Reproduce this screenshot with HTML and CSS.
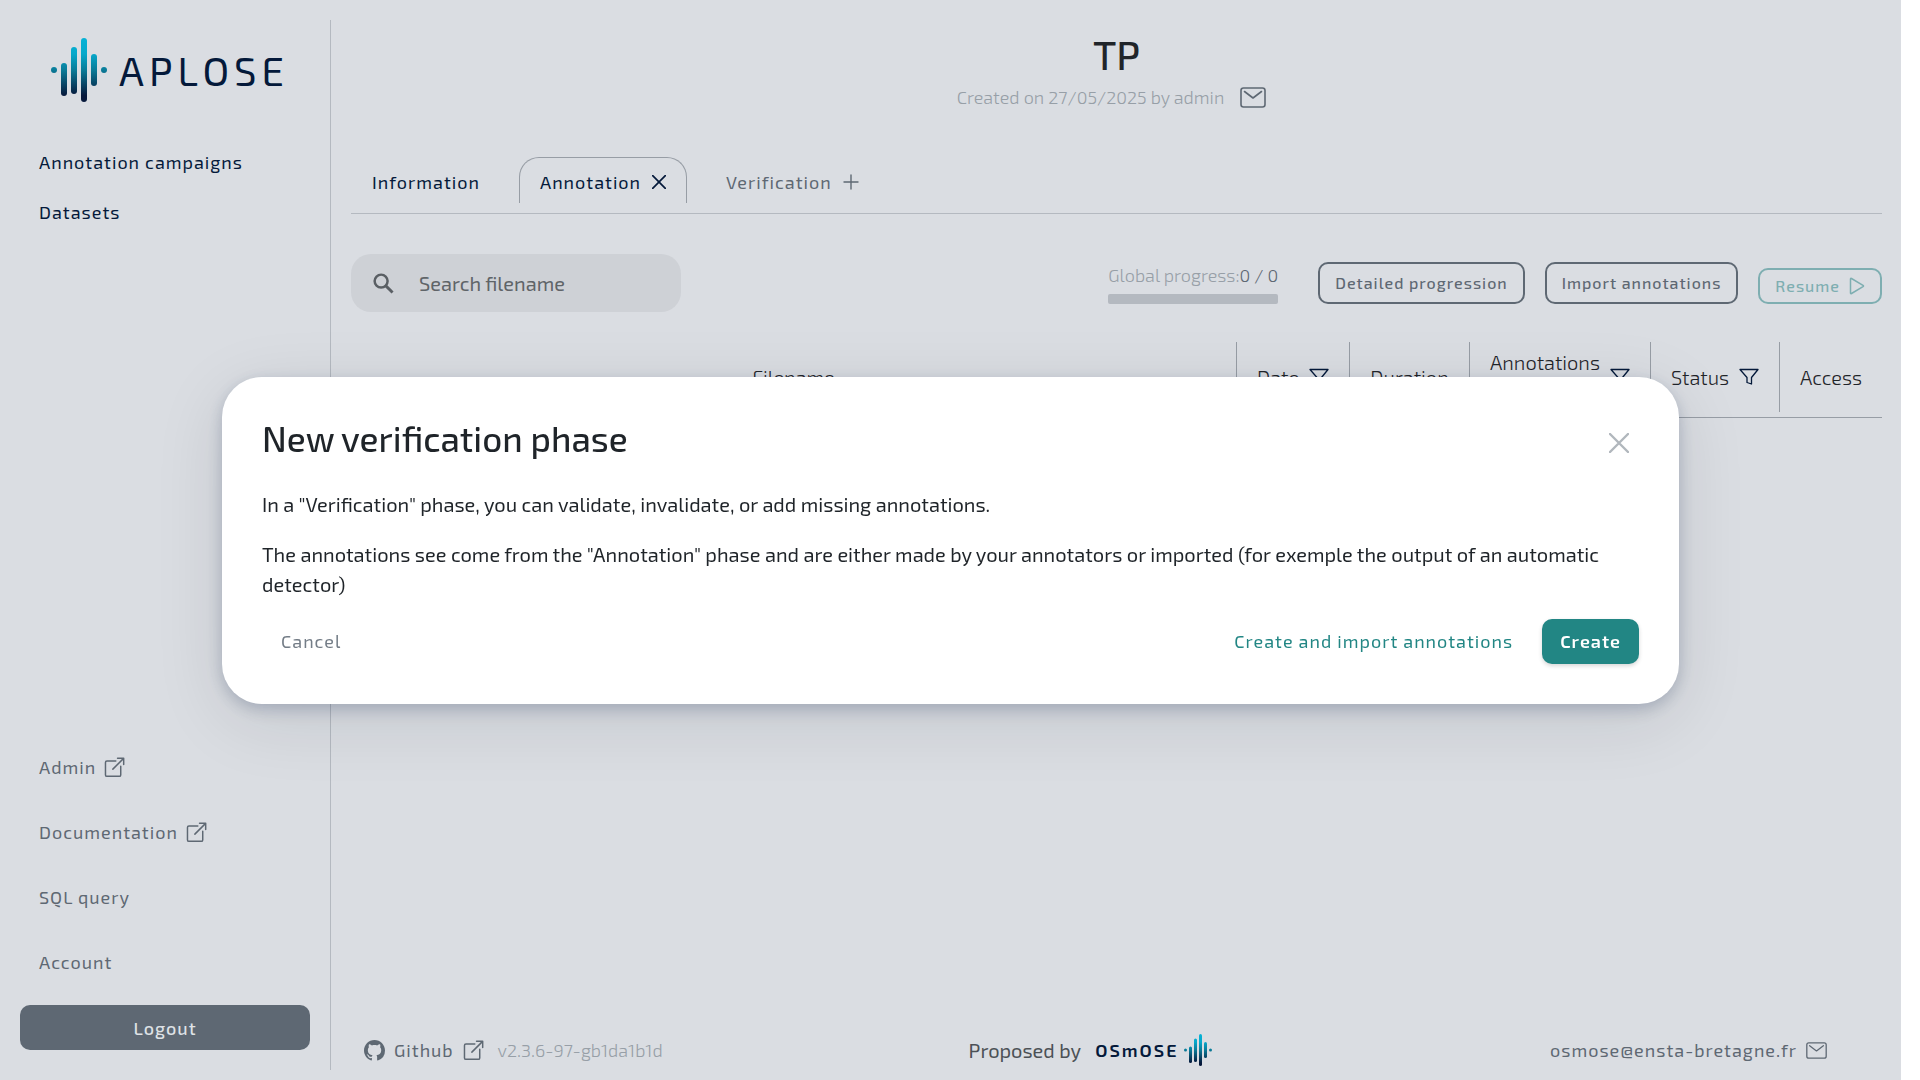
FILE: index.html
```html
<!DOCTYPE html>
<html lang="en">
<head>
<meta charset="utf-8">
<title>APLOSE</title>
<link rel="stylesheet" href="styles.css">
</head>
<body>
<svg class="defs" aria-hidden="true">
  <defs>
    <linearGradient id="wave" gradientUnits="userSpaceOnUse" x1="0" y1="0" x2="0" y2="64">
      <stop offset="0" stop-color="#06b2d6"/>
      <stop offset="0.25" stop-color="#06a8cb"/>
      <stop offset="0.5" stop-color="#0a7b98"/>
      <stop offset="0.9" stop-color="#06183b"/>
    </linearGradient>
  </defs>
  <symbol id="logo" viewBox="0 0 56 64">
    <g fill="url(#wave)">
      <circle cx="3" cy="32" r="3"/>
      <rect x="10" y="25" width="6" height="33" rx="3"/>
      <rect x="20" y="9" width="6" height="47" rx="3"/>
      <rect x="30" y="0" width="6" height="64" rx="3"/>
      <rect x="40" y="16" width="6" height="32" rx="3"/>
      <circle cx="53" cy="32" r="3"/>
    </g>
  </symbol>
  <symbol id="open" viewBox="0 0 512 512">
    <path d="M288 100H72q-36 0-36 36v300q0 36 36 36h300q36 0 36-36V224M330 32h150v150M472 40L216 296" fill="none" stroke="currentColor" stroke-width="36" stroke-linecap="round" stroke-linejoin="round"/>
  </symbol>
  <symbol id="mail" viewBox="0 0 26 21">
    <rect x="1" y="1" width="24" height="19" rx="2.5" fill="none" stroke="currentColor" stroke-width="1.6"/>
    <path d="M4.5 4.5L13 11l8.500-6.500" fill="none" stroke="currentColor" stroke-width="1.600" stroke-linecap="round" stroke-linejoin="round"/>
  </symbol>
  <symbol id="cross" viewBox="0 0 20 20">
    <path d="M1 1l18 18M19 1L1 19" fill="none" stroke="currentColor" stroke-width="2.400" stroke-linecap="round"/>
  </symbol>
  <symbol id="funnel" viewBox="0 0 20 18">
    <path d="M1 1.500h18l-6.500 8V16l-4.500-1.500V9.500z" fill="none" stroke="currentColor" stroke-width="1.300" stroke-linejoin="round"/>
  </symbol>
</svg>

<div class="app">
  <aside class="sidebar">
    <a class="brand" href="#"><svg class="brand-logo"><use href="#logo"/></svg><span>APLOSE</span></a>
    <nav class="nav">
      <a href="#">Annotation campaigns</a>
      <a href="#">Datasets</a>
    </nav>
    <nav class="links">
      <a href="#">Admin <svg class="icon"><use href="#open"/></svg></a>
      <a href="#">Documentation <svg class="icon"><use href="#open"/></svg></a>
      <a href="#">SQL query</a>
      <a href="#">Account</a>
    </nav>
    <button class="logout" type="button">Logout</button>
  </aside>

  <div class="page">
    <main class="main">
      <header class="heading">
        <h1>TP</h1>
        <p>Created on 27/05/2025 by admin
          <a href="#" aria-label="Send an email"><svg class="icon-mail"><use href="#mail"/></svg></a></p>
      </header>

      <nav class="tabs">
        <a class="tab" href="#">Information</a>
        <a class="tab tab-active" href="#">Annotation <svg class="icon-cross"><use href="#cross"/></svg></a>
        <a class="tab tab-muted" href="#">Verification
          <svg class="icon-plus" viewBox="0 0 16 16"><path d="M8 1v14M1 8h14" fill="none" stroke="currentColor" stroke-width="1.400" stroke-linecap="round"/></svg></a>
      </nav>

      <div class="toolbar">
        <label class="search">
          <svg class="icon" viewBox="0 0 22 22"><circle cx="8.500" cy="8.500" r="6.800" fill="none" stroke="currentColor" stroke-width="2.600"/><path d="M13.500 13.500l7 7" stroke="currentColor" stroke-width="3"/></svg>
          <input type="search" placeholder="Search filename" aria-label="Search filename">
        </label>
        <div class="progress">
          <p>Global progress:<span>0 / 0</span></p>
          <div class="bar"></div>
        </div>
        <div class="actions">
          <button class="outline" type="button">Detailed progression</button>
          <button class="outline" type="button">Import annotations</button>
          <button class="outline resume" type="button" disabled>Resume
            <svg viewBox="0 0 16 18"><path d="M1.500 2v14q0 1 1 .5L14 9.700q1-.7 0-1.400L2.500 1.500q-1-.5-1 .5z" fill="none" stroke="currentColor" stroke-width="1.500" stroke-linejoin="round"/></svg></button>
        </div>
      </div>

      <table class="files">
        <thead>
          <tr>
            <th class="file"><div class="cell">Filename</div></th>
            <th class="date"><div class="cell">Date <svg><use href="#funnel"/></svg></div></th>
            <th class="duration"><div class="cell">Duration</div></th>
            <th class="annotations"><div class="cell"><span class="two-lines">Annotations</span> <svg><use href="#funnel"/></svg></div></th>
            <th class="status"><div class="cell">Status <svg><use href="#funnel"/></svg></div></th>
            <th class="access"><div class="cell">Access</div></th>
          </tr>
        </thead>
      </table>
    </main>

    <footer class="footer">
      <div class="footer-part">
        <a href="#">
          <svg class="icon" viewBox="0 0 16 16"><path fill="currentColor" d="M8 0C3.580 0 0 3.580 0 8c0 3.540 2.290 6.530 5.470 7.590.4.070.55-.17.55-.38 0-.19-.01-.82-.01-1.490-2.010.37-2.530-.49-2.690-.94-.09-.23-.48-.94-.82-1.130-.28-.15-.68-.52-.01-.53.63-.01 1.080.58 1.230.82.72 1.210 1.870.87 2.330.66.07-.52.28-.87.51-1.070-1.780-.2-3.640-.89-3.640-3.950 0-.87.31-1.590.82-2.150-.08-.2-.36-1.020.08-2.120 0 0 .67-.21 2.200.82.64-.18 1.320-.27 2-.27s1.360.09 2 .27c1.530-1.040 2.200-.82 2.200-.82.44 1.100.16 1.920.08 2.120.51.56.82 1.270.82 2.150 0 3.070-1.870 3.750-3.650 3.950.29.25.54.73.54 1.480 0 1.070-.01 1.930-.01 2.200 0 .21.15.46.55.38A8.010 8.010 0 0 0 16 8c0-4.420-3.580-8-8-8z"/></svg>
          Github <svg class="icon"><use href="#open"/></svg></a>
        <span class="version">v2.3.6-97-gb1da1b1d</span>
      </div>
      <div class="footer-part proposed">Proposed by
        <a class="osmose" href="#">OSmOSE <svg class="osmose-logo"><use href="#logo"/></svg></a></div>
      <div class="footer-part contact">
        <a href="#">osmose@ensta-bretagne.fr <svg class="icon"><use href="#mail"/></svg></a>
      </div>
    </footer>
  </div>
</div>

<div class="overlay">
  <section class="modal" role="dialog" aria-modal="true" aria-labelledby="modal-title">
    <header class="modal-head">
      <h2 id="modal-title">New verification phase</h2>
      <button class="close" type="button" aria-label="Close"><svg><use href="#cross"/></svg></button>
    </header>
    <p>In a "Verification" phase, you can validate, invalidate, or add missing annotations.</p>
    <p>The annotations see come from the "Annotation" phase and are either made by your annotators or imported (for exemple the output of an automatic detector)</p>
    <div class="modal-actions">
      <button class="text-button" type="button">Cancel</button>
      <button class="text-button accent" type="button">Create and import annotations</button>
      <button class="create" type="button">Create</button>
    </div>
  </section>
</div>
</body>
</html>
```
FILE: styles.css
```css
* { box-sizing: border-box; }

:root {
  --bg: #dadde2;
  --ink: #1f2429;
  --navy: #04193a;
  --medium: #5e6873;
  --light: #979fa7;
  --line: #b4b9c0;
  --line-dark: #979da5;
  --teal: #228684;
}

html { background: #fff; }

body {
  margin: 0 19px 0 0;
  background: var(--bg);
  color: var(--ink);
  font: 400 20px/30px "Exo 2", Roboto, "Liberation Sans", sans-serif;
}

h1, h2, p { margin: 0; font-weight: 400; }
a { color: inherit; text-decoration: none; }
button { font: inherit; color: inherit; background: none; border: 0; padding: 0; cursor: pointer; }
svg { flex: none; }
.defs { position: absolute; width: 0; height: 0; }
.icon { width: 21px; height: 21px; }

.app { display: grid; grid-template-columns: 331px 1fr; min-height: 100vh; }

.nav, .links, .tabs, .actions, .logout, .footer a, .modal-actions {
  font-size: 18px;
  font-weight: 400;
  letter-spacing: 1px;
}

/* Sidebar */
.sidebar {
  display: flex;
  flex-direction: column;
  margin: 20px 0 10px;
  padding: 18px 20px 20px;
  border-right: 1px solid var(--line);
}
.brand {
  display: flex;
  align-items: center;
  gap: 12px;
  margin: 0 0 35px 31px;
  color: var(--navy);
  font-size: 40px;
  line-height: 64px;
  letter-spacing: 5px;
}
.brand-logo { width: 56px; height: 64px; }
.nav, .links { display: flex; flex-direction: column; padding: 0 19px; }
.nav { color: var(--navy); line-height: 50px; }
.links { margin-top: auto; color: var(--medium); line-height: 65px; }
.links a { display: flex; align-items: center; gap: 8px; }
.logout {
  height: 45px;
  margin-top: 10px;
  border-radius: 10px;
  background: var(--medium);
  color: #dfe2e6;
  font-weight: 500;
}

/* Page */
.page { display: flex; flex-direction: column; padding: 0 19px 0 20px; }
.main { flex: 1; }

.heading { padding-top: 29px; text-align: center; }
.heading h1 { font-size: 40px; line-height: 50px; font-weight: 500; }
.heading p {
  display: flex;
  justify-content: center;
  align-items: center;
  gap: 16px;
  margin-top: 3px;
  padding-right: 10px;
  color: var(--light);
  font-size: 18px;
  font-weight: 300;
}
.heading a { display: flex; color: var(--medium); }
.icon-mail { width: 26px; height: 21px; }

.tabs {
  display: flex;
  gap: 18px;
  margin-top: 45px;
  padding-bottom: 10px;
  border-bottom: 1px solid var(--line);
  color: var(--navy);
}
.tab {
  display: flex;
  align-items: center;
  gap: 11px;
  height: 46px;
  padding: 2px 20px 0;
  border: 1px solid transparent;
  border-bottom: 0;
  border-radius: 20px 20px 0 0;
}
.tab-active { border-color: var(--line-dark); }
.tab-muted { color: var(--medium); }
.icon-cross { width: 14px; height: 14px; }
.icon-plus { width: 16px; height: 16px; }

.toolbar { display: flex; align-items: flex-end; margin-top: 40px; }
.search {
  display: flex;
  align-items: center;
  gap: 25px;
  width: 330px;
  height: 58px;
  padding: 0 22px;
  border-radius: 20px;
  background: #ced1d6;
  color: #5a5f64;
}
.search input {
  flex: 1;
  min-width: 0;
  padding: 0;
  border: 0;
  outline: 0;
  background: none;
  font: inherit;
  color: inherit;
}
.search input::placeholder { color: #5f6468; opacity: 1; }
.progress { margin: 0 40px 8px auto; color: var(--light); font-size: 18px; font-weight: 300; }
.progress p { margin-bottom: 4px; font-weight: inherit; }
.progress span { color: var(--medium); }
.bar { height: 10px; border-radius: 2px; background: var(--line); }
.actions { display: flex; align-items: flex-end; gap: 20px; margin-bottom: 8px; font-size: 16px; font-weight: 500; color: var(--medium); }
.outline {
  display: flex;
  align-items: center;
  gap: 9px;
  height: 42px;
  padding: 0 15px;
  border: 2px solid currentColor;
  border-radius: 10px;
  letter-spacing: inherit;
}
.resume { height: 36px; color: #7eaeb1; }
.resume svg { width: 16px; height: 18px; }

.files { width: 100%; margin-top: 30px; border-collapse: collapse; table-layout: fixed; border-bottom: 1px solid var(--line-dark); }
.files th { padding: 0 0 5px; font-weight: 300; }
.cell {
  display: flex;
  align-items: center;
  justify-content: center;
  gap: 10px;
  height: 70px;
  border-left: 1px solid var(--line-dark);
}
.file .cell { border-left: 0; }
.files svg { width: 20px; height: 18px; color: var(--navy); }
.two-lines { min-height: 60px; }
.date { width: 113px; }
.duration { width: 120px; }
.annotations { width: 181px; }
.status { width: 129px; }
.access { width: 103px; }

.footer { display: grid; grid-template-columns: 1fr auto 1fr; align-items: center; height: 60px; padding: 0 55px 0 13px; }
.footer-part { display: flex; align-items: center; gap: 14px; }
.footer a { display: flex; align-items: center; gap: 9px; color: var(--medium); }
.version { color: var(--light); font-size: 18px; font-weight: 300; }
.proposed { padding-right: 10px; color: #4c5156; }
.footer .osmose { color: var(--navy); font-size: 18px; font-weight: 600; letter-spacing: 2px; gap: 6px; }
.osmose-logo { width: 28px; height: 32px; }
.contact { justify-content: flex-end; }

/* Modal */
.overlay {
  position: fixed;
  inset: 0 19px 0 0;
  display: flex;
  align-items: center;
  justify-content: center;
}
.modal {
  width: calc(100% - 444px);
  padding: 40px;
  border-radius: 40px;
  background: #fff;
  box-shadow: 0 5px 16px rgba(30, 50, 90, 0.24), 0 16px 70px rgba(20, 30, 40, 0.11);
}
.modal-head { display: flex; align-items: center; justify-content: space-between; margin-bottom: 30px; padding-right: 10px; }
.modal-head h2 { font-size: 35px; font-weight: 500; line-height: 42px; }
.close { display: flex; margin-top: 10px; color: #b1b7bd; }
.close svg { width: 20px; height: 20px; }
.modal p { margin-bottom: 20px; }
.modal-actions { display: flex; align-items: center; gap: 29px; }
.modal-actions button { letter-spacing: inherit; }
.text-button { color: #747d87; }
.text-button:first-child { margin: 0 auto 0 19px; }
.accent { color: var(--teal); }
.create {
  height: 45px;
  padding: 0 18px;
  border-radius: 10px;
  background: var(--teal);
  color: #fff;
  font-weight: 600;
  box-shadow: 0 2px 4px rgba(0, 0, 0, 0.16);
}
```
